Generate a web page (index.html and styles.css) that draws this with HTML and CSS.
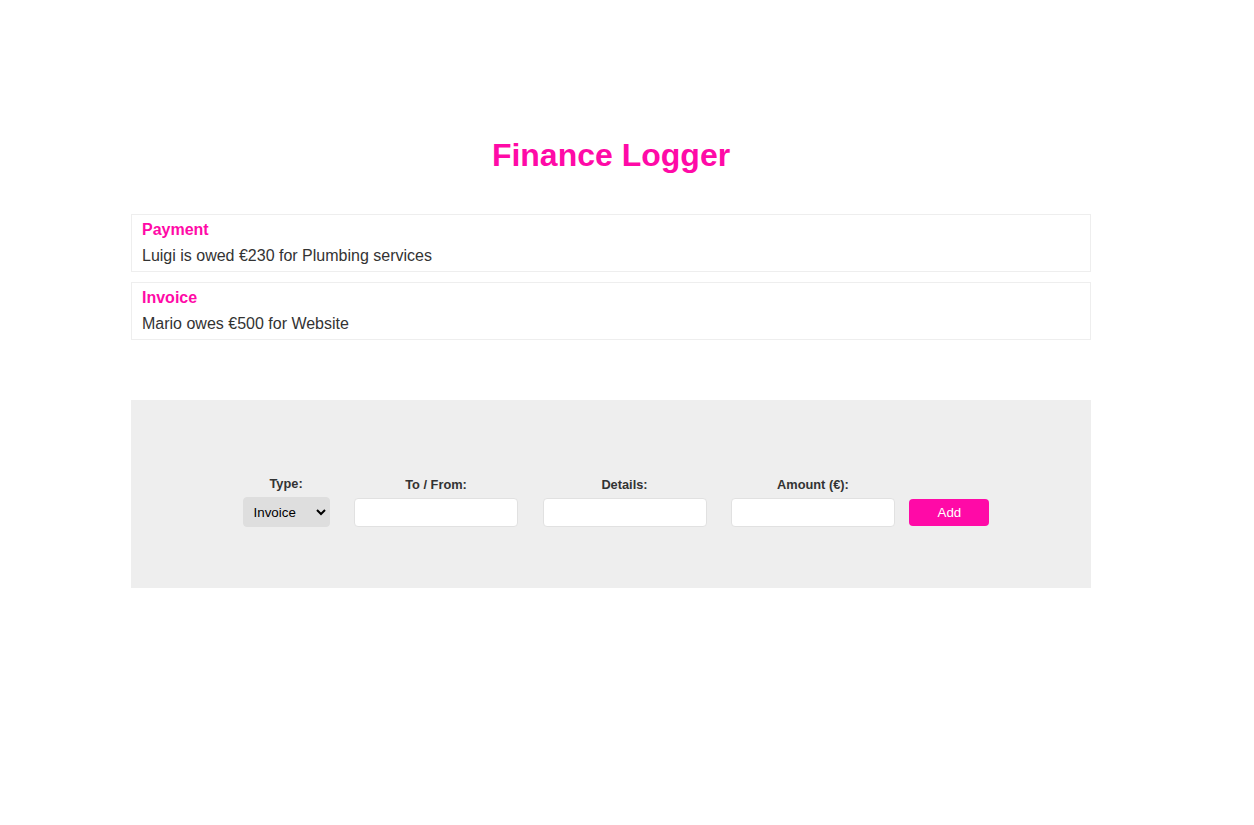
FILE: index.html
```html
<!DOCTYPE html>
<html lang="en">
<head>
<meta charset="UTF-8">
<title>Finance Logger</title>
<link rel="stylesheet" href="styles.css">
</head>
<body>
<div class="page">
  <header class="wrapper">
    <h1>Finance Logger</h1>
    <ul class="item-list">
      <li>
        <h4>Payment</h4>
        <p>Luigi is owed €230 for Plumbing services</p>
      </li>
      <li>
        <h4>Invoice</h4>
        <p>Mario owes €500 for Website</p>
      </li>
    </ul>
  </header>
  <footer class="wrapper footer">
    <form class="new-item-form">
      <div class="field">
        <label>Type:</label>
        <select>
          <option value="invoice">Invoice</option>
          <option value="payment">Payment</option>
        </select>
      </div>
      <div class="field">
        <label>To / From:</label>
        <input type="text">
      </div>
      <div class="field">
        <label>Details:</label>
        <input type="text">
      </div>
      <div class="field">
        <label>Amount (€):</label>
        <input type="number">
      </div>
      <button type="button">Add</button>
    </form>
  </footer>
</div>
</body>
</html>
```

FILE: styles.css
```css
body {
  margin: 0;
  font-family: "Liberation Sans", Arial, sans-serif;
}
.page {
  width: 1222px;
  padding-top: 97px;
}
.wrapper {
  max-width: 960px;
  margin: 0 auto;
}
h1 {
  margin: 40px auto;
  color: #ff0aa7;
  text-align: center;
  font-size: 32px;
}
.item-list {
  padding: 0;
  list-style-type: none;
}
.item-list li {
  padding: 6px 10px;
  border: 1px solid #eee;
  margin: 10px auto;
}
.item-list h4 {
  color: #ff0aa7;
  margin: 0;
  font-size: 16px;
}
.item-list p {
  margin: 8px 0 0;
  color: #333;
  font-size: 16px;
}
.footer {
  background: #eee;
  padding: 60px 60px 61px;
  margin-top: 60px;
  box-sizing: border-box;
}
.new-item-form {
  max-width: 960px;
  margin: 0 auto;
  text-align: center;
}
label {
  display: block;
  font-weight: bold;
  font-size: 0.8em;
  color: #333;
  margin: 16px 0 6px;
}
input, button, select {
  padding: 6px;
  border: 1px solid #e1e1e1;
  border-radius: 4px;
  font-family: "Liberation Sans", Arial, sans-serif;
  font-size: 13.33px;
  box-sizing: border-box;
  vertical-align: baseline;
}
input {
  width: 164px;
  height: 29px;
  background: #fff;
}
select {
  width: 87px;
  height: 30px;
  background-color: #dedede;
  border-color: #dedede;
  color: #000;
}
button {
  color: white;
  border: 0;
  background: #ff0aa7;
  width: 80px;
  height: 27px;
}
.field {
  display: inline-block;
  margin: 0 10px;
}
```
